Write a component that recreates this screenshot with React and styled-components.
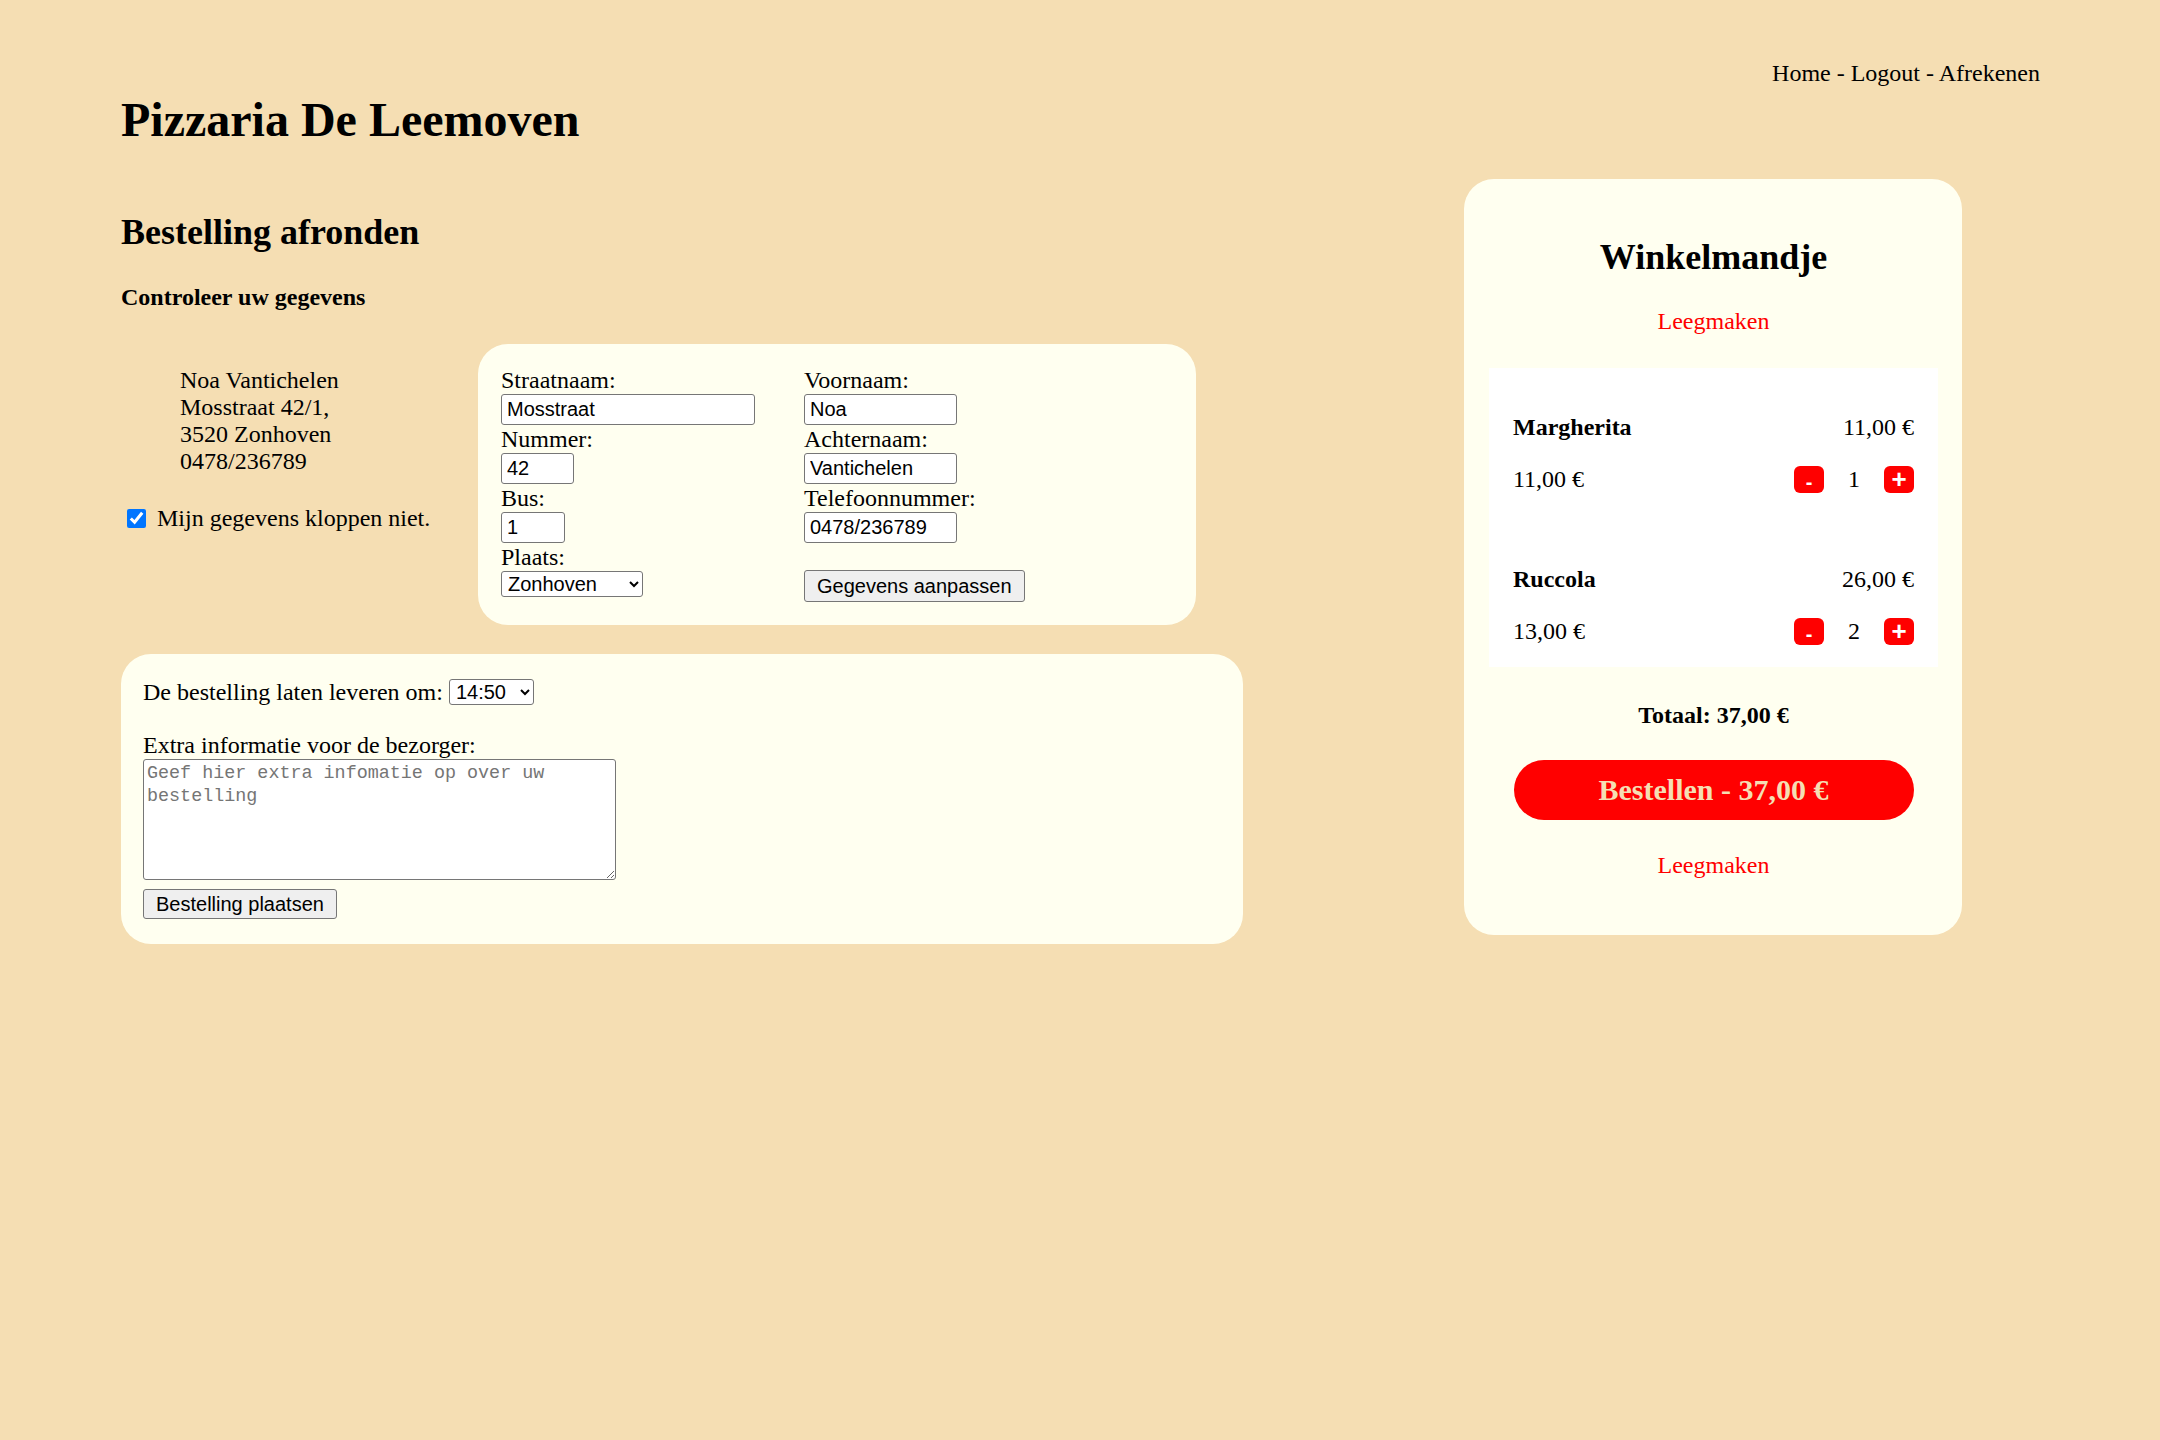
import styled, {createGlobalStyle} from 'styled-components';

const GlobalStyle = createGlobalStyle`
  body {
    margin: 0;
    background: #f5deb3;
    font-family: "Liberation Serif", "Times New Roman", serif;
    font-size: 24px;
    color: #000;
  }
`;

const Page = styled.div`
  padding: 59px 120px 80px 121px;
`;

const Nav = styled.nav`
  text-align: right;
  line-height: 28px;
`;

const NavLink = styled.a`
  color: #000;
  text-decoration: none;
`;

const Title = styled.h1`
  font-size: 48px;
  line-height: 55px;
  margin: 5px 0 32px;
`;

const Main = styled.div`
  display: flex;
  align-items: flex-start;
  gap: 221px;
`;

const LeftCol = styled.div`
  width: 1122px;
`;

const SectionTitle = styled.h2`
  font-size: 36px;
  line-height: 41px;
  margin: 33px 0 30px;
`;

const SubTitle = styled.h4`
  font-size: 24px;
  line-height: 28px;
  margin: 0 0 33px;
`;

const InfoRow = styled.div`
  display: flex;
  align-items: flex-start;
`;

const AddressCol = styled.div`
  width: 357px;
  padding-top: 23px;
`;

const Address = styled.div`
  padding-left: 59px;
  line-height: 27px;
`;

const CheckRow = styled.label`
  display: flex;
  align-items: center;
  margin-top: 29px;
  line-height: 28px;
`;

const Check = styled.input`
  width: 19px;
  height: 19px;
  margin: 0 11px 0 6px;
  accent-color: #0075ff;
`;

const Panel = styled.div`
  background: #fffff0;
  border-radius: 30px;
  padding: ${(p) => p.$pad};
  width: ${(p) => p.$width};
  box-sizing: border-box;
  margin-top: ${(p) => p.$top || '0'};
`;

const FormGrid = styled.div`
  display: grid;
  grid-template-columns: 303px auto;
`;

const FieldCol = styled.div`
  display: flex;
  flex-direction: column;
  align-items: flex-start;
`;

const Label = styled.label`
  line-height: 28px;
  height: 28px;
`;

const Input = styled.input`
  box-sizing: border-box;
  width: ${(p) => p.$w}px;
  height: 31px;
  border: 1px solid #767676;
  border-radius: 3px;
  padding: 1px 5px;
  font-family: "Liberation Sans", Arial, sans-serif;
  font-size: 20px;
  background: #fff;
`;

const Select = styled.select`
  box-sizing: border-box;
  width: ${(p) => p.$w}px;
  height: 26px;
  border: 1px solid #767676;
  border-radius: 3px;
  font-family: "Liberation Sans", Arial, sans-serif;
  font-size: 20px;
  padding: 0 2px;
  background: #fff;
  color: #000;
`;

const Button = styled.button`
  box-sizing: border-box;
  height: ${(p) => p.$h}px;
  margin-top: ${(p) => p.$top || 0}px;
  padding: 0 12px;
  background: #efefef;
  border: 1px solid #767676;
  border-radius: 3px;
  font-family: "Liberation Sans", Arial, sans-serif;
  font-size: 20px;
  color: #000;
`;

const TimeRow = styled.div`
  display: flex;
  align-items: center;
  gap: 6px;
  line-height: 28px;
`;

const ExtraLabel = styled.label`
  display: block;
  margin-top: 25px;
  line-height: 28px;
`;

const TextArea = styled.textarea`
  display: block;
  box-sizing: border-box;
  width: 473px;
  height: 121px;
  border: 1px solid #767676;
  border-radius: 3px;
  padding: 2px 3px;
  font-family: "Liberation Mono", monospace;
  font-size: 18.4px;
  line-height: 23px;
  background: #fff;
  &::placeholder {
    color: #757575;
  }
`;

const Cart = styled.div`
  width: 498px;
  box-sizing: border-box;
  background: #fffff0;
  border-radius: 30px;
  padding: 58px 24px 56px 25px;
  text-align: center;
`;

const CartTitle = styled.h2`
  font-size: 36px;
  line-height: 41px;
  margin: 0;
`;

const ClearLink = styled.a`
  display: block;
  color: #ff0000;
  line-height: 28px;
  text-decoration: none;
  margin-top: ${(p) => p.$top}px;
`;

const Items = styled.div`
  margin-top: 33px;
  background: #fff;
  display: flex;
  flex-direction: column;
  gap: 5px;
  text-align: left;
`;

const Item = styled.div`
  padding: 45px 24px 22px;
`;

const Row = styled.div`
  display: flex;
  justify-content: space-between;
  align-items: center;
  line-height: 28px;
  height: 28px;
  margin-top: ${(p) => p.$top || 0}px;
`;

const Name = styled.span`
  font-weight: bold;
`;

const Qty = styled.div`
  display: flex;
  align-items: center;
`;

const QtyButton = styled.button`
  width: 30px;
  height: 27px;
  border: none;
  border-radius: 6px;
  background: #ff0000;
  color: #fff;
  font-family: "Liberation Sans", Arial, sans-serif;
  font-weight: bold;
  font-size: ${(p) => (p.$minus ? '20px' : '26px')};
  line-height: 1;
  padding: ${(p) => (p.$minus ? '6px 0 0' : '0')};
  display: flex;
  align-items: center;
  justify-content: center;
`;

const QtyValue = styled.span`
  width: 60px;
  text-align: center;
`;

const Total = styled.div`
  margin-top: 34px;
  font-weight: bold;
  line-height: 28px;
`;

const OrderButton = styled.button`
  display: block;
  width: 400px;
  height: 60px;
  margin: 31px auto 0;
  border: none;
  border-radius: 30px;
  background: #ff0000;
  color: #f5deb3;
  font-family: "Liberation Serif", "Times New Roman", serif;
  font-weight: bold;
  font-size: 30px;
`;

const items = [
  {name: 'Margherita', total: '11,00 €', price: '11,00 €', qty: 1},
  {name: 'Ruccola', total: '26,00 €', price: '13,00 €', qty: 2},
];

export default function App() {
  return (
    <Page>
      <GlobalStyle />
      <Nav>
        <NavLink href="#">Home</NavLink> - <NavLink href="#">Logout</NavLink> -{' '}
        <NavLink href="#">Afrekenen</NavLink>
      </Nav>
      <Title>Pizzaria De Leemoven</Title>

      <Main>
        <LeftCol>
          <SectionTitle>Bestelling afronden</SectionTitle>
          <SubTitle>Controleer uw gegevens</SubTitle>

          <InfoRow>
            <AddressCol>
              <Address>
                Noa Vantichelen
                <br />
                Mosstraat 42/1,
                <br />
                3520 Zonhoven
                <br />
                0478/236789
              </Address>
              <CheckRow>
                <Check type="checkbox" defaultChecked />
                Mijn gegevens kloppen niet.
              </CheckRow>
            </AddressCol>

            <Panel $width="718px" $pad="22px 23px 23px">
              <FormGrid>
                <FieldCol>
                  <Label>Straatnaam:</Label>
                  <Input $w={254} defaultValue="Mosstraat" />
                  <Label>Nummer:</Label>
                  <Input $w={73} defaultValue="42" />
                  <Label>Bus:</Label>
                  <Input $w={64} defaultValue="1" />
                  <Label>Plaats:</Label>
                  <Select $w={142} defaultValue="Zonhoven">
                    <option>Zonhoven</option>
                    <option>Hasselt</option>
                  </Select>
                </FieldCol>
                <FieldCol>
                  <Label>Voornaam:</Label>
                  <Input $w={153} defaultValue="Noa" />
                  <Label>Achternaam:</Label>
                  <Input $w={153} defaultValue="Vantichelen" />
                  <Label>Telefoonnummer:</Label>
                  <Input $w={153} defaultValue="0478/236789" />
                  <Button $h={32} $top={27}>
                    Gegevens aanpassen
                  </Button>
                </FieldCol>
              </FormGrid>
            </Panel>
          </InfoRow>

          <Panel $width="1122px" $pad="24px 22px 25px" $top="29px">
            <TimeRow>
              De bestelling laten leveren om:
              <Select $w={85} defaultValue="14:50">
                <option>14:50</option>
                <option>15:00</option>
              </Select>
            </TimeRow>
            <ExtraLabel>Extra informatie voor de bezorger:</ExtraLabel>
            <TextArea placeholder="Geef hier extra infomatie op over uw bestelling" />
            <Button $h={30} $top={9}>
              Bestelling plaatsen
            </Button>
          </Panel>
        </LeftCol>

        <Cart>
          <CartTitle>Winkelmandje</CartTitle>
          <ClearLink href="#" $top={29}>
            Leegmaken
          </ClearLink>
          <Items>
            {items.map((it) => (
              <Item key={it.name}>
                <Row>
                  <Name>{it.name}</Name>
                  <span>{it.total}</span>
                </Row>
                <Row $top={24}>
                  <span>{it.price}</span>
                  <Qty>
                    <QtyButton $minus>-</QtyButton>
                    <QtyValue>{it.qty}</QtyValue>
                    <QtyButton>+</QtyButton>
                  </Qty>
                </Row>
              </Item>
            ))}
          </Items>
          <Total>Totaal: 37,00 €</Total>
          <OrderButton>Bestellen - 37,00 €</OrderButton>
          <ClearLink href="#" $top={31}>
            Leegmaken
          </ClearLink>
        </Cart>
      </Main>
    </Page>
  );
}
